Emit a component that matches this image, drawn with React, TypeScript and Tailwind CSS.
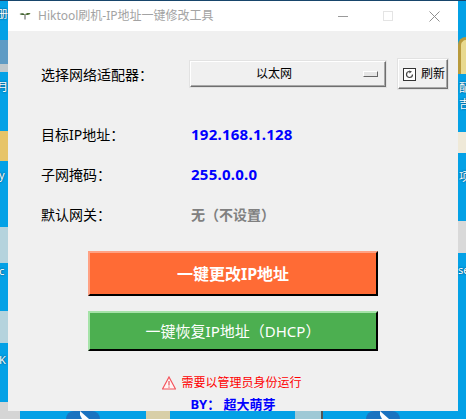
const cjk = { fontFamily: '"Noto Sans", "Noto Sans CJK SC", sans-serif' }

function Sprout() {
  return (
    <svg width="12" height="8" viewBox="0 0 12 8" className="shrink-0">
      <path d="M6 7.5V2.5" stroke="#555" strokeWidth="1" fill="none" />
      <path d="M6 2.500C4.500.8 2 .8.5 2c1.400 1.300 4 1.400 5.500.5Z" fill="#3f5f2e" />
      <path d="M6 2.500C7 1 9.500.6 11.500 1.500 10.300 3 7.500 3.400 6 2.500Z" fill="#4b6b33" />
    </svg>
  )
}

function TitleBar() {
  return (
    <div className="flex h-[30px] items-center bg-white pl-[11px]">
      <Sprout />
      <span className="ml-[7px] text-[12px] text-[#a3a3a3]">Hiktool刷机-IP地址一键修改工具</span>
      <div className="ml-auto flex items-center">
        <svg width="10" height="10" viewBox="0 0 10 10" className="mr-[35px]">
          <path d="M0 5.500H10" stroke="#9a9a9a" />
        </svg>
        <svg width="10" height="10" viewBox="0 0 10 10" className="mr-[36px]">
          <rect x=".5" y=".5" width="9" height="9" fill="none" stroke="#e4e4e4" />
        </svg>
        <svg width="11" height="11" viewBox="0 0 11 11" className="mr-[18px]">
          <path d="M.5.500 10.500 10.500M10.500.500.5 10.500" stroke="#8f8f8f" />
        </svg>
      </div>
    </div>
  )
}

function AdapterRow() {
  return (
    <div className="flex h-[30px] items-center">
      <span className="w-[149px] text-[14px] text-black">{'选择网络适配器\uFF1A'}</span>
      <div className="flex h-[26px] w-[196px] items-center border border-t-white border-l-white border-r-[#6f6f6f] border-b-[#6f6f6f] bg-[#f0f0f0] pr-[7px] text-[12px] text-black shadow-[inset_-1px_-1px_0_#a8a8a8,0_0_0_1px_#e2e2e2]">
        <span className="ml-[65px]">以太网</span>
        <span className="ml-auto h-[6px] w-[15px] border border-t-white border-l-white border-r-[#666] border-b-[#666] bg-[#e6e6e6]" />
      </div>
      <button
        type="button"
        className="ml-[12px] flex h-[30px] w-[50px] items-center gap-[5px] border border-t-white border-l-white border-r-[#6f6f6f] border-b-[#6f6f6f] bg-[#f0f0f0] pl-[4px] text-[12px] text-black shadow-[inset_-1px_-1px_0_#a8a8a8,0_0_0_1px_#e2e2e2]"
      >
        <svg width="13" height="13" viewBox="0 0 13 13" className="shrink-0">
          <rect x=".5" y=".5" width="12" height="12" fill="#fff" stroke="#333" />
          <path d="M9.500 6.500A3 3 0 1 1 6.500 3.500" stroke="#444" strokeWidth="1.200" fill="none" />
          <path d="M6 2.500 9 3.500 6.500 5.500Z" fill="#444" />
        </svg>
        刷新
      </button>
    </div>
  )
}

function InfoRow({ label, value, valueClass }: { label: string; value: string; valueClass: string }) {
  return (
    <div className="flex h-[20px] items-center">
      <span className="w-[150px] text-[14px] text-black">{label}</span>
      <span className={`font-bold ${valueClass}`}>{value}</span>
    </div>
  )
}

function ActionButton({ label, className }: { label: string; className: string }) {
  return (
    <button
      type="button"
      className={`ml-[47px] flex w-[290px] items-center justify-center border-2 border-r-black border-b-black text-white ${className}`}
    >
      {label}
    </button>
  )
}

function IconLabel({ text, className }: { text: string; className: string }) {
  return (
    <span
      className={`block h-[14px] whitespace-nowrap text-[11px] leading-[14px] text-white [text-shadow:0_0_2px_#00304f] ${className}`}
    >
      {text}
    </span>
  )
}

function LeftStrip() {
  return (
    <div className="flex w-[8px] shrink-0 flex-col overflow-hidden">
      <IconLabel text="册" className="mt-[6px] -ml-[3px]" />
      <div className="mt-[19px] h-[24px] bg-[#5f9bc4]" />
      <div className="h-[8px] bg-[#c0c8cc]" />
      <IconLabel text="月" className="mt-[8px] -ml-[3px]" />
      <div className="mt-[37px] h-[30px] bg-[#e7c468]" />
      <IconLabel text="y" className="mt-[7px] -ml-[1px]" />
      <div className="mt-[45px] h-[36px] bg-[#b5d3dd]" />
      <IconLabel text="c" className="mt-[1px] -ml-[1px]" />
      <div className="mt-[33px] h-[32px] bg-[#b5d3dd]" />
      <IconLabel text="K" className="mt-[10px] -ml-[1px]" />
      <div className="mt-[35px] h-[9px] bg-[#d5d5d5]" />
    </div>
  )
}

function RightStrip() {
  return (
    <div className="flex w-[8px] shrink-0 flex-col overflow-hidden">
      <div className="mt-[36px] h-[37px] rounded-tl-[8px] border-t-[3px] border-l-[3px] border-[#b89a3c] bg-[#e8d98f]" />
      <IconLabel text="配" className="mt-[7px] ml-[1px]" />
      <IconLabel text="吉" className="mt-[2px] ml-[1px]" />
      <div className="mt-[21px] h-[21px] bg-[#efe9d8]" />
      <IconLabel text="项" className="mt-[17px] ml-[1px]" />
      <div className="mt-[37px] h-[32px] bg-[#d9d9d9]" />
      <IconLabel text="se" className="mt-[10px]" />
    </div>
  )
}

function BottomStrip() {
  return (
    <div className="flex h-[8px] overflow-hidden">
      <div className="h-[8px] w-[20px] bg-[#d5d5d5]" />
      <div className="ml-[46px] flex h-[16px] w-[34px] justify-center rounded-full bg-[#1a73c0]">
        <svg width="16" height="8" viewBox="0 0 16 8">
          <path d="M5 0 14 8H7L5 4Z" fill="#fff" />
        </svg>
      </div>
      <div className="ml-[46px] h-[8px] w-[24px] bg-[#d8cfa8]" />
      <div className="ml-[125px] h-[8px] w-[28px] border-r-2 border-[#555] bg-[#9fc9d6]" />
      <div className="ml-[43px] flex h-[16px] w-[34px] justify-center rounded-full bg-[#1a73c0]">
        <svg width="16" height="8" viewBox="0 0 16 8">
          <path d="M5 0 14 8H7L5 4Z" fill="#fff" />
        </svg>
      </div>
    </div>
  )
}

export default function App() {
  return (
    <div className="flex h-[419px] w-[466px] flex-col overflow-hidden bg-[#04a1e6]" style={cjk}>
      <div className="h-[1px] bg-[#17456b]" />
      <div className="flex h-[410px]">
        <LeftStrip />
        <div className="flex w-[450px] flex-col bg-[#f0f0f0]">
          <TitleBar />
          <div className="flex flex-col pt-[28px] pl-[33px]">
            <AdapterRow />
            <div className="mt-[35px] flex flex-col gap-[20px]">
              <InfoRow label={'目标IP地址\uFF1A'} value="192.168.1.128" valueClass="text-[15px] tracking-[0.25px] text-[#0000ff]" />
              <InfoRow label={'子网掩码\uFF1A'} value="255.0.0.0" valueClass="text-[15px] tracking-[0.25px] text-[#0000ff]" />
              <InfoRow label={'默认网关\uFF1A'} value={'无\uFF08不设置\uFF09'} valueClass="text-[14px] text-[#808080]" />
            </div>
            <ActionButton
              label="一键更改IP地址"
              className="mt-[27px] h-[45px] border-t-[#ffa183] border-l-[#ffa183] bg-[#ff6b35] text-[16px] font-bold"
            />
            <ActionButton
              label={'一键恢复IP地址\uFF08DHCP\uFF09'}
              className="mt-[15px] h-[40px] border-t-[#a5e3a8] border-l-[#a5e3a8] bg-[#4caf50] text-[15px]"
            />
            <div className="mt-[24px] flex h-[16px] items-center justify-center gap-[5px] pr-[35px] text-[12px] text-[#ff0000]">
              <svg width="14" height="14" viewBox="0 0 14 14" className="shrink-0">
                <path d="M7 1 13.500 13H.5Z" fill="#fff4f4" stroke="#f4525a" strokeWidth="1.200" />
                <path d="M7 5v4.500M7 10.500v1.200" stroke="#e0343c" />
              </svg>
              需要以管理员身份运行
            </div>
            <div className="mt-[6px] h-[14px] pr-[33px] text-center text-[13px] leading-[14px] font-bold text-[#0000ff]">
              {'BY\uFF1A 超大萌芽'}
            </div>
          </div>
        </div>
        <RightStrip />
      </div>
      <BottomStrip />
    </div>
  )
}
